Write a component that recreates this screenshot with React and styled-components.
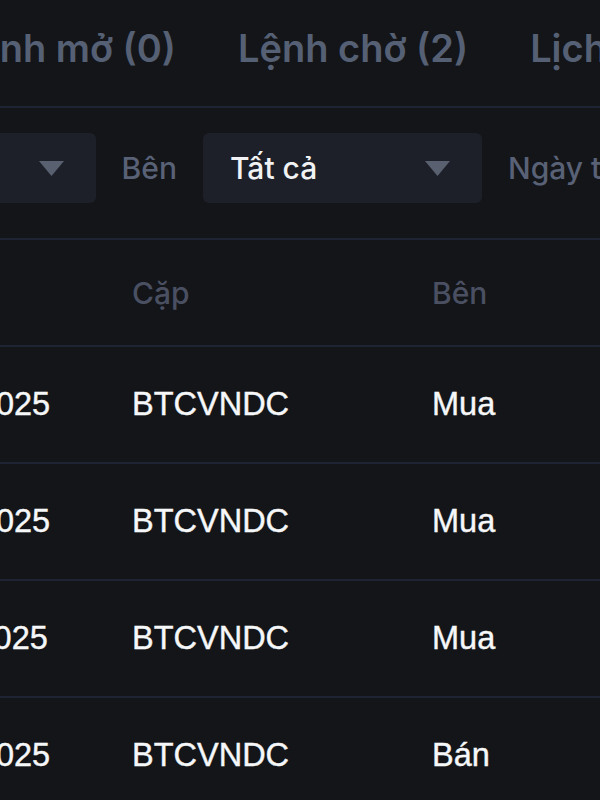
import React from "react";
import styled, { createGlobalStyle } from "styled-components";

const GlobalStyle = createGlobalStyle`
  html, body {
    margin: 0;
    padding: 0;
    background: #131519;
  }
`;

const Page = styled.div`
  width: 600px;
  height: 800px;
  overflow: hidden;
  background: #131519;
  font-family: Inter, "Noto Sans", sans-serif;
`;

// the view is a crop of a wider panel, so the panel is shifted left
const Panel = styled.div`
  width: 1200px;
  margin-left: -300px;
`;

const TabBar = styled.div`
  display: flex;
  gap: 62px;
  height: 108px;
  padding-top: 25px;
  box-sizing: border-box;
  border-bottom: 2px solid #1f2434;
`;

const Tab = styled.div`
  width: ${(props) => (props.$w ? props.$w + "px" : "auto")};
  text-align: ${(props) => (props.$w ? "right" : "left")};
  font-size: 38px;
  line-height: 46px;
  font-weight: 600;
  color: ${(props) => (props.$active ? "#e9ebef" : "#566074")};
  white-space: nowrap;
`;

const FilterBar = styled.div`
  display: flex;
  align-items: center;
  gap: 26px;
  padding: 25px 0 35px 60px;
  border-bottom: 2px solid #1f2434;
`;

const Label = styled.span`
  font-size: 30px;
  font-weight: 500;
  color: #596176;
  white-space: nowrap;
`;

const Select = styled.div`
  width: ${(props) => props.$w}px;
  height: 70px;
  box-sizing: border-box;
  display: flex;
  align-items: center;
  justify-content: space-between;
  padding: 0 32px 0 27px;
  background: #1d2028;
  border-radius: 6px;
  font-size: 30px;
  font-weight: 500;
  color: #f1f2f4;
`;

const Arrow = () => (
  <svg width="25" height="15" viewBox="0 0 25 15">
    <path d="M0 0 L25 0 L12.5 15 Z" fill="#596070" />
  </svg>
);

const Table = styled.div`
  padding-left: 52px;
`;

const Row = styled.div`
  display: grid;
  grid-template-columns: 380px 300px 1fr;
  align-items: center;
  height: ${(props) => (props.$head ? 105 : 115)}px;
  border-bottom: 2px solid #1f2434;
`;

const HeadCell = styled.div`
  font-size: 30px;
  font-weight: 500;
  color: #4a5062;
  white-space: nowrap;
`;

const Cell = styled.div`
  font-family: "Liberation Sans", Arial, sans-serif;
  font-size: 32.5px;
  color: #f6f7f8;
  -webkit-text-stroke: 0.4px #f6f7f8;
  white-space: nowrap;
`;

const orders = [
  { time: "10:25:14 12/03/2025", pair: "BTCVNDC", side: "Mua" },
  { time: "09:48:02 12/03/2025", pair: "BTCVNDC", side: "Mua" },
  { time: "09:12:37 11/03/2025", pair: "BTCVNDC", side: "Mua" },
  { time: "16:05:51 10/03/2025", pair: "BTCVNDC", side: "Bán" },
];

export default function App() {
  return (
    <>
      <GlobalStyle />
      <Page>
        <Panel>
          <TabBar>
            <Tab $w={476}>Lệnh mở (0)</Tab>
            <Tab>Lệnh chờ (2)</Tab>
            <Tab>Lịch sử lệnh</Tab>
          </TabBar>

          <FilterBar>
            <Label>Cặp</Label>
            <Select $w={252}>
              <span>Tất cả</span>
              <Arrow />
            </Select>
            <Label>Bên</Label>
            <Select $w={279}>
              <span>Tất cả</span>
              <Arrow />
            </Select>
            <Label>Ngày tạo</Label>
          </FilterBar>

          <Table>
            <Row $head>
              <HeadCell>Thời gian</HeadCell>
              <HeadCell>Cặp</HeadCell>
              <HeadCell>Bên</HeadCell>
            </Row>
            {orders.map((item, key) => (
              <Row key={key}>
                <Cell>{item.time}</Cell>
                <Cell>{item.pair}</Cell>
                <Cell>{item.side}</Cell>
              </Row>
            ))}
          </Table>
        </Panel>
      </Page>
    </>
  );
}
